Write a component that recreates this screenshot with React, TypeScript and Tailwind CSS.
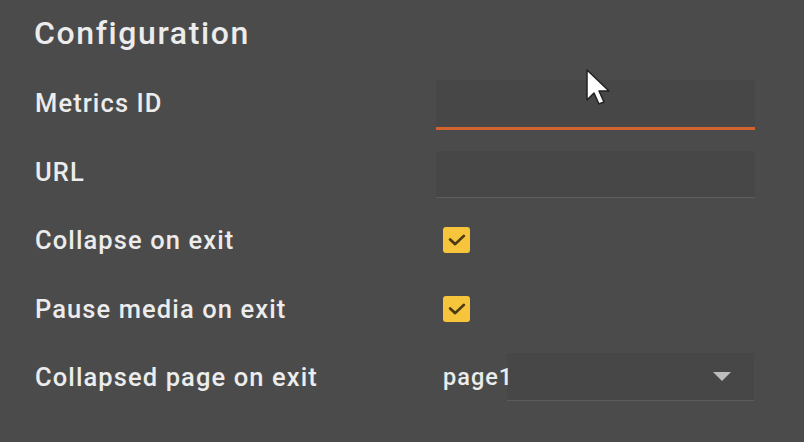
export default function App() {
  const rows = ['Metrics ID', 'URL', 'Collapse on exit', 'Pause media on exit', 'Collapsed page on exit']

  return (
    <div className="relative h-[442px] w-[804px] overflow-hidden bg-[#4b4b4b] font-['Roboto',sans-serif] text-[#ececec]">
      <div className="pl-[34px] pt-[13px]">
        <h1 className="h-[40px] text-[32px] leading-[40px] font-medium tracking-[1.6px]">Configuration</h1>
        <div className="mt-[16px] grid grid-cols-[401px_320px] pl-[1px]">
          {rows.map((label, i) => (
            <div key={label} className="contents">
              <div className="flex h-[68.5px] items-center text-[25.5px] font-medium tracking-[1.1px]">{label}</div>
              <div className="flex h-[68.5px] items-center">
                {i === 0 && (
                  <div className="mt-[4px] h-[50px] w-[319px] border-b-[3px] border-[#d2622e] bg-[#474747]" />
                )}
                {i === 1 && (
                  <div className="mt-[6px] h-[47px] w-[319px] border-b border-[#5e5e5e] bg-[#474747]" />
                )}
                {(i === 2 || i === 3) && (
                  <div className="ml-[7px] flex h-[26px] w-[27px] items-center justify-center rounded-[3px] bg-[#f6c53c]">
                    <svg viewBox="0 0 24 24" className="h-[22px] w-[22px]" fill="none" stroke="#4a3b14" strokeWidth="3" strokeLinecap="round" strokeLinejoin="round">
                      <path d="M4.5 11.5l5.5 5L19.5 7.5" />
                    </svg>
                  </div>
                )}
                {i === 4 && (
                  <div className="relative flex w-[318px] items-center">
                    <div className="ml-[71px] flex h-[48px] w-[247px] items-center justify-end border-b border-[#5c5c5c] bg-[#474747] pr-[22px]">
                      <svg viewBox="0 0 20 10" className="h-[9px] w-[20px]">
                        <path d="M0 0h20L10 10z" fill="#bdbdbd" />
                      </svg>
                    </div>
                    <span className="absolute left-[7px] text-[23.5px] font-medium tracking-[1px]">page1</span>
                  </div>
                )}
              </div>
            </div>
          ))}
        </div>
      </div>
      {/* mouse cursor */}
      <svg className="absolute left-[585px] top-[68px]" width="28" height="40" viewBox="0 0 28 40">
        <path d="M2 2v30l7-7 5 11 5-2-5-11h10z" fill="#fff" stroke="#222" strokeWidth="1.5" strokeLinejoin="round" />
      </svg>
    </div>
  )
}
